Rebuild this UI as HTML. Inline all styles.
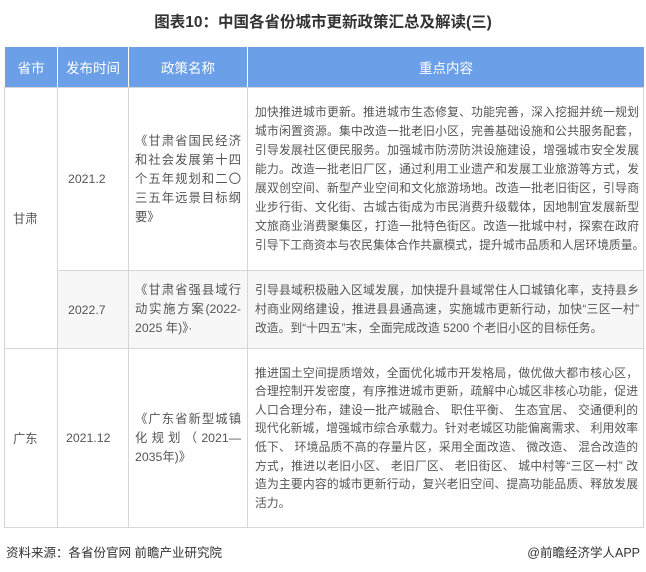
<!DOCTYPE html><html><head><meta charset="utf-8"><style>
*{margin:0;padding:0;box-sizing:border-box}
body{width:646px;height:572px;background:#fff;font-family:"Liberation Sans","Noto Sans CJK SC",sans-serif;color:#555;position:relative;overflow:hidden}
.t{position:absolute;top:10px;left:0;width:646px;text-align:center;font-size:15.5px;font-weight:bold;color:#333}
.c{position:absolute;border-left:1px solid #d6d6d6;border-top:1px solid #d6d6d6;display:flex;align-items:center;font-size:12.3px}
.h{background:#6b9fe7;color:#fff;justify-content:center;font-size:13.5px;border-color:#fff}
.p{line-height:19px;padding:0 6px;flex-direction:column;justify-content:center;align-items:stretch}
.p div{white-space:nowrap;text-align:justify;text-align-last:justify}
.p div.l{text-align-last:left}
.k{font-size:11.8px;padding:0 5px 0 7px}
.g{background:#f7f7f7}
</style></head><body>
<div class="t">图表10：中国各省份城市更新政策汇总及解读(三)</div>
<div class="c h" style="left:4px;top:46px;width:53px;height:41px">省市</div>
<div class="c h" style="left:57px;top:46px;width:71px;height:41px">发布时间</div>
<div class="c h" style="left:128px;top:46px;width:119px;height:41px">政策名称</div>
<div class="c h" style="left:247px;top:46px;width:397px;height:41px">重点内容</div>

<div class="c" style="left:4px;top:87px;width:53px;height:261px;padding-left:8px">甘肃</div>
<div class="c" style="left:57px;top:87px;width:71px;height:183px;padding-left:10px">2021.2</div>
<div class="c p" style="left:128px;top:87px;width:119px;height:183px"><div>《甘肃省国民经济</div><div>和社会发展第十四</div><div>个五年规划和二〇</div><div>三五年远景目标纲</div><div class="l">要》</div></div>
<div class="c p k" style="left:247px;top:87px;width:397px;height:183px"><div>加快推进城市更新。推进城市生态修复、功能完善，深入挖掘并统一规划</div><div>城市闲置资源。集中改造一批老旧小区，完善基础设施和公共服务配套，</div><div>引导发展社区便民服务。加强城市防涝防洪设施建设，增强城市安全发展</div><div>能力。改造一批老旧厂区，通过利用工业遗产和发展工业旅游等方式，发</div><div>展双创空间、新型产业空间和文化旅游场地。改造一批老旧街区，引导商</div><div>业步行街、文化街、古城古街成为市民消费升级载体，因地制宜发展新型</div><div>文旅商业消费聚集区，打造一批特色街区。改造一批城中村，探索在政府</div><div>引导下工商资本与农民集体合作共赢模式，提升城市品质和人居环境质量。</div></div>

<div class="c g" style="left:57px;top:270px;width:71px;height:78px;padding-left:10px">2022.7</div>
<div class="c p g" style="left:128px;top:270px;width:119px;height:78px"><div>《甘肃省强县域行</div><div>动实施方案(2022-</div><div class="l">2025 年)》·</div></div>
<div class="c p g k" style="left:247px;top:270px;width:397px;height:78px"><div>引导县域积极融入区域发展，加快提升县域常住人口城镇化率，支持县乡</div><div>村商业网络建设，推进县县通高速，实施城市更新行动，加快“三区一村”</div><div class="l">改造。到“十四五”末，全面完成改造 5200 个老旧小区的目标任务。</div></div>

<div class="c" style="left:4px;top:348px;width:53px;height:180px;padding-left:8px;border-bottom:1px solid #d6d6d6">广东</div>
<div class="c" style="left:57px;top:348px;width:71px;height:180px;padding-left:8px;border-bottom:1px solid #d6d6d6">2021.12</div>
<div class="c p" style="left:128px;top:348px;width:119px;height:180px;border-bottom:1px solid #d6d6d6"><div>《广东省新型城镇</div><div>化规划（2021—</div><div class="l">2035年)》</div></div>
<div class="c p k" style="left:247px;top:348px;width:397px;height:180px;border-bottom:1px solid #d6d6d6;border-right:1px solid #d6d6d6;line-height:18.6px"><div>推进国土空间提质增效，全面优化城市开发格局，做优做大都市核心区，</div><div>合理控制开发密度，有序推进城市更新，疏解中心城区非核心功能，促进</div><div>人口合理分布，建设一批产城融合、 职住平衡、 生态宜居、 交通便利的</div><div>现代化新城，增强城市综合承载力。针对老城区功能偏离需求、 利用效率</div><div>低下、 环境品质不高的存量片区，采用全面改造、 微改造、 混合改造的</div><div>方式，推进以老旧小区、 老旧厂区、 老旧街区、 城中村等“三区一村” 改</div><div>造为主要内容的城市更新行动，复兴老旧空间、提高功能品质、释放发展</div><div class="l">活力。</div></div>
<div style="position:absolute;left:643px;top:87px;width:1px;height:261px;background:#d6d6d6"></div>
<div style="position:absolute;left:6px;top:542px;font-size:12.5px;color:#333">资料来源：各省份官网 前瞻产业研究院</div>
<div style="position:absolute;right:6px;top:542px;font-size:12.5px;color:#333">@前瞻经济学人APP</div>
</body></html>
